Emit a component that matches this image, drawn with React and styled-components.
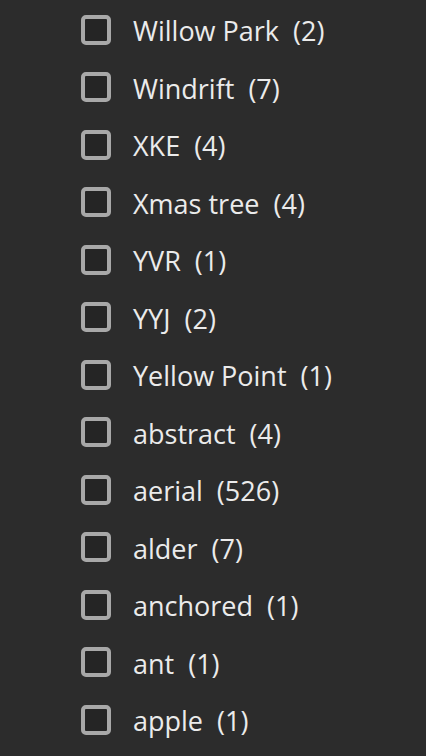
import React from "react";
import styled, { createGlobalStyle } from "styled-components";

const GlobalStyle = createGlobalStyle`
  html, body {
    margin: 0;
    padding: 0;
    background: #2c2c2c;
  }
  body {
    font-family: "Open Sans", "Liberation Sans", sans-serif;
  }
`;

const List = styled.ul`
  list-style: none;
  margin: 0;
  padding: 1px 0 0 81px;
  background: #2c2c2c;
  min-height: 756px;
  box-sizing: border-box;
`;

const Row = styled.li`
  display: flex;
  align-items: center;
  height: 57.5px;
`;

const Box = styled.span`
  flex: none;
  width: 30px;
  height: 30px;
  box-sizing: border-box;
  border: 4px solid #a8a8a8;
  border-radius: 5px;
  background: #252525;
  margin-right: 22px;
`;

const Label = styled.span`
  color: #ebebeb;
  font-size: 27px;
  font-weight: 500;
  line-height: 1;
  padding-top: 2px;
  white-space: nowrap;
`;

const Count = styled.span`
  margin-left: 14px;
`;

const tags = [
  ["Willow Park", 2],
  ["Windrift", 7],
  ["XKE", 4],
  ["Xmas tree", 4],
  ["YVR", 1],
  ["YYJ", 2],
  ["Yellow Point", 1],
  ["abstract", 4],
  ["aerial", 526],
  ["alder", 7],
  ["anchored", 1],
  ["ant", 1],
  ["apple", 1],
];

export default function App() {
  return (
    <>
      <GlobalStyle />
      <List>
        {tags.map(([name, count]) => (
          <Row key={name}>
            <Box />
            <Label>
              {name}
              <Count>({count})</Count>
            </Label>
          </Row>
        ))}
      </List>
    </>
  );
}
